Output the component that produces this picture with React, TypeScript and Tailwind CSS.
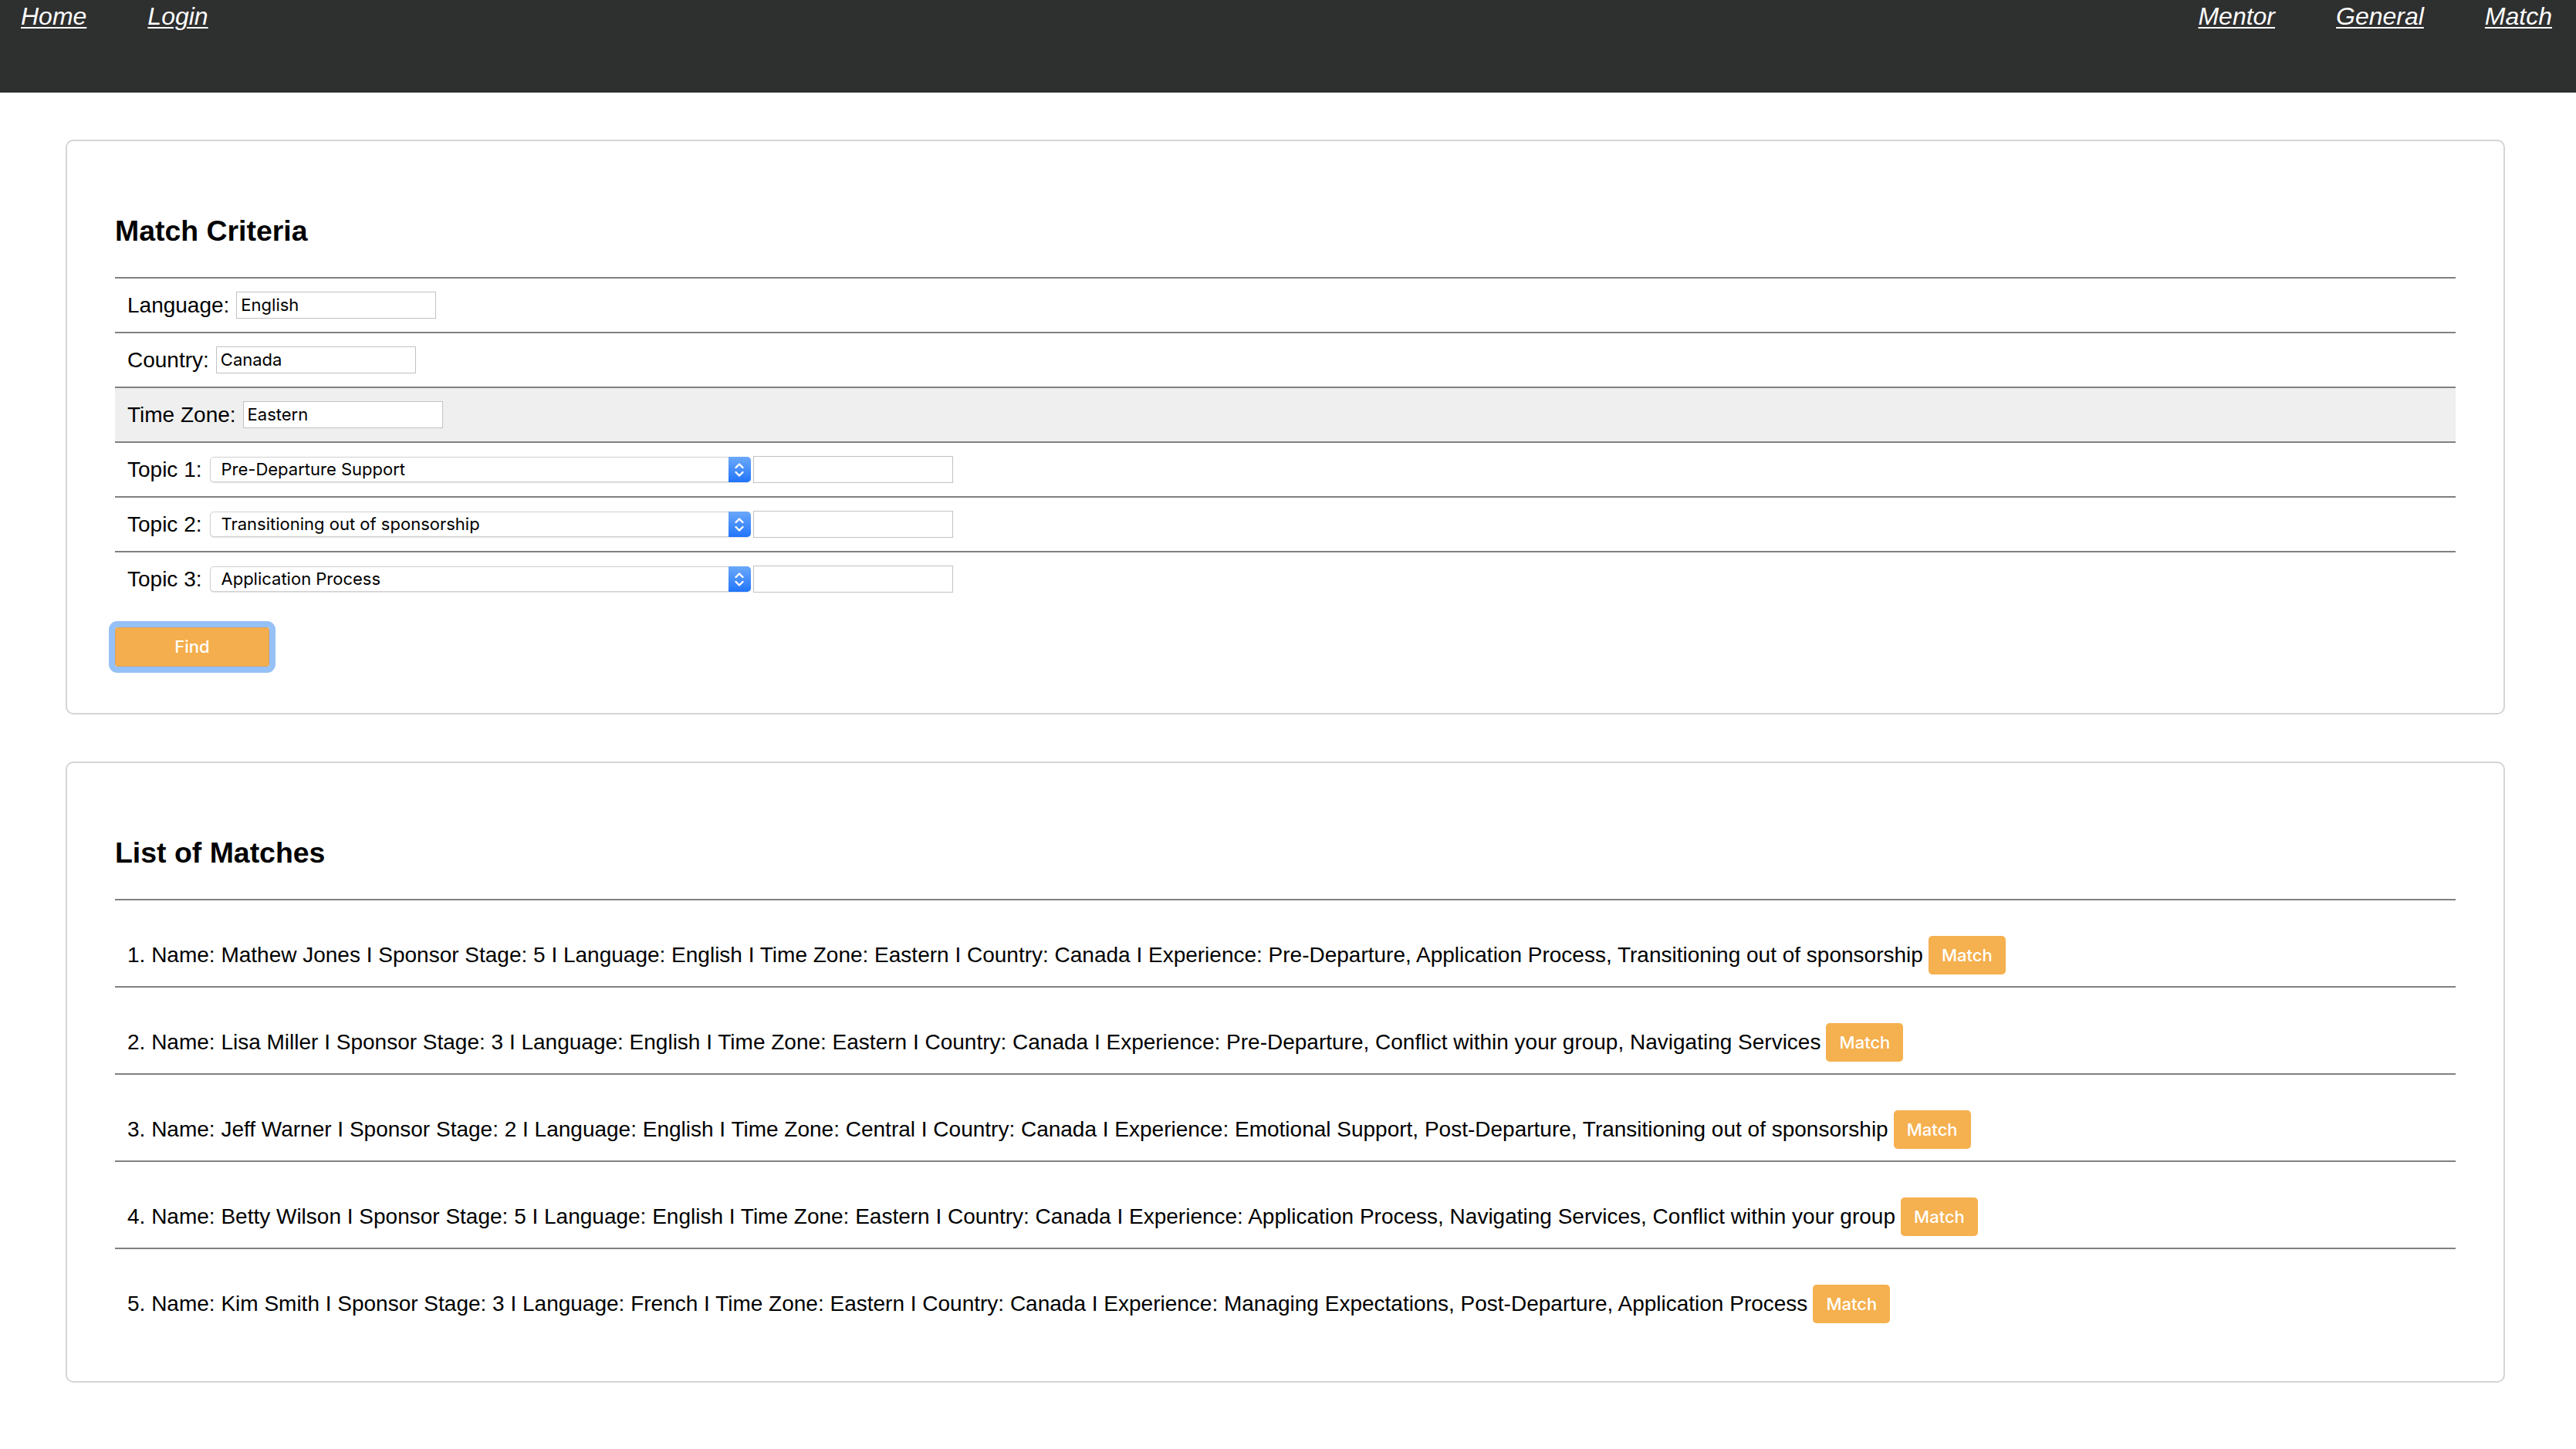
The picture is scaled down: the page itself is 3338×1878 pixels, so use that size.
import React from 'react'

const SANS = { fontFamily: '"Liberation Sans", Arial, sans-serif' }

const navLeft = ['Home', 'Login']
const navRight = ['Mentor', 'General', 'Match']

const criteria = [
  { label: 'Language:', value: 'English', shaded: false },
  { label: 'Country:', value: 'Canada', shaded: false },
  { label: 'Time Zone:', value: 'Eastern', shaded: true },
]

const topics = [
  { label: 'Topic 1:', value: 'Pre-Departure Support' },
  { label: 'Topic 2:', value: 'Transitioning out of sponsorship' },
  { label: 'Topic 3:', value: 'Application Process' },
]

const matches = [
  'Name: Mathew Jones I Sponsor Stage: 5 I Language: English I Time Zone: Eastern I Country: Canada I Experience: Pre-Departure, Application Process, Transitioning out of sponsorship',
  'Name: Lisa Miller I Sponsor Stage: 3 I Language: English I Time Zone: Eastern I Country: Canada I Experience: Pre-Departure, Conflict within your group, Navigating Services',
  'Name: Jeff Warner I Sponsor Stage: 2 I Language: English I Time Zone: Central I Country: Canada I Experience: Emotional Support, Post-Departure, Transitioning out of sponsorship',
  'Name: Betty Wilson I Sponsor Stage: 5 I Language: English I Time Zone: Eastern I Country: Canada I Experience: Application Process, Navigating Services, Conflict within your group',
  'Name: Kim Smith I Sponsor Stage: 3 I Language: French I Time Zone: Eastern I Country: Canada I Experience: Managing Expectations, Post-Departure, Application Process',
]

function NavLink({ label }: { label: string }) {
  return <a className="italic text-[32px] leading-[37px] text-white underline decoration-2 underline-offset-[3px]">{label}</a>
}

function TextBox({ value, width = 'w-[259px]' }: { value?: string; width?: string }) {
  return (
    <div
      className={`${width} h-[35px] border border-[#c2c2c2] bg-white pl-[5px] flex items-center text-[22px] text-black`}
      style={{ fontFamily: 'Inter, "Open Sans", sans-serif' }}
    >
      {value}
    </div>
  )
}

function FakeSelect({ value }: { value: string }) {
  return (
    <div className="flex h-[33px] w-[701px] rounded-[5px] border border-[#d0d0d0] bg-white shadow-[0_1px_1px_rgba(0,0,0,0.12)]">
      <div className="flex flex-1 items-center pl-[14px] text-[22px] text-black" style={{ fontFamily: 'Inter, "Open Sans", sans-serif' }}>
        {value}
      </div>
      <div className="-my-px -mr-px flex w-[29px] items-center justify-center rounded-r-[5px] bg-gradient-to-b from-[#6aa8fa] to-[#1f74fb]">
        <svg width="14" height="22" viewBox="0 0 14 22" fill="none" stroke="white" strokeWidth="2.4" strokeLinecap="round" strokeLinejoin="round">
          <path d="M2.5 8 L7 3.5 L11.5 8" />
          <path d="M2.5 14 L7 18.5 L11.5 14" />
        </svg>
      </div>
    </div>
  )
}

function Card({ title, children }: { title: string; children: React.ReactNode }) {
  return (
    <section className="rounded-[10px] border-2 border-[#d5d5d5] bg-white px-[62px] pt-[60px] pb-[60px]">
      <h3 className="mt-[35px] mb-[38px] text-[37.44px] font-bold leading-[43px] text-black">{title}</h3>
      {children}
    </section>
  )
}

export default function App() {
  return (
    <div className="min-h-[1878px] w-full bg-white" style={SANS}>
      <header className="flex h-[120px] items-start justify-between bg-[#2e2f2f] pt-[3px]">
        <nav className="flex gap-[79px] pl-[27px]">
          {navLeft.map((item) => (
            <NavLink key={item} label={item} />
          ))}
        </nav>
        <nav className="flex gap-[79px] pr-[31px]">
          {navRight.map((item) => (
            <NavLink key={item} label={item} />
          ))}
        </nav>
      </header>

      <main className="flex flex-col gap-[61px] pt-[61px] pl-[85px] pr-[92px]">
        <Card title="Match Criteria">
          {criteria.map((row) => (
            <div
              key={row.label}
              className={`flex h-[71px] items-center gap-[9px] border-t-2 border-[#808080] pl-[16px] text-[28px] text-black ${row.shaded ? 'bg-[#efefef]' : ''}`}
            >
              <span>{row.label}</span>
              <TextBox value={row.value} />
            </div>
          ))}
          {topics.map((row) => (
            <div key={row.label} className="flex h-[71px] items-center border-t-2 border-[#808080] pl-[16px] text-[28px] text-black">
              <span className="mr-[10px]">{row.label}</span>
              <FakeSelect value={row.value} />
              <div className="ml-[3px]">
                <TextBox />
              </div>
            </div>
          ))}
          <div className="mt-[28px]">
            <button
              className="h-[51px] w-[200px] rounded-[3px] border border-[#dba25a] bg-[#f5ae4d] text-[22px] font-medium text-white outline-[8px] outline-solid outline-[#96c1f7]"
              style={{ fontFamily: 'Inter, "Open Sans", sans-serif' }}
            >
              Find
            </button>
          </div>
        </Card>

        <Card title="List of Matches">
          {matches.map((text, i) => (
            <div key={i} className="flex h-[113px] items-start border-t-2 border-[#808080] pt-[46px] pl-[16px]">
              <div className="flex h-[50px] items-center text-[28px] leading-[32px] text-black">
                <span>
                  {i + 1}. {text}
                </span>
                <button
                  className="ml-[7px] h-[50px] w-[100px] rounded-[5px] bg-[#f5b04f] text-[22px] font-medium text-white"
                  style={{ fontFamily: 'Inter, "Open Sans", sans-serif' }}
                >
                  Match
                </button>
              </div>
            </div>
          ))}
        </Card>
      </main>
    </div>
  )
}
